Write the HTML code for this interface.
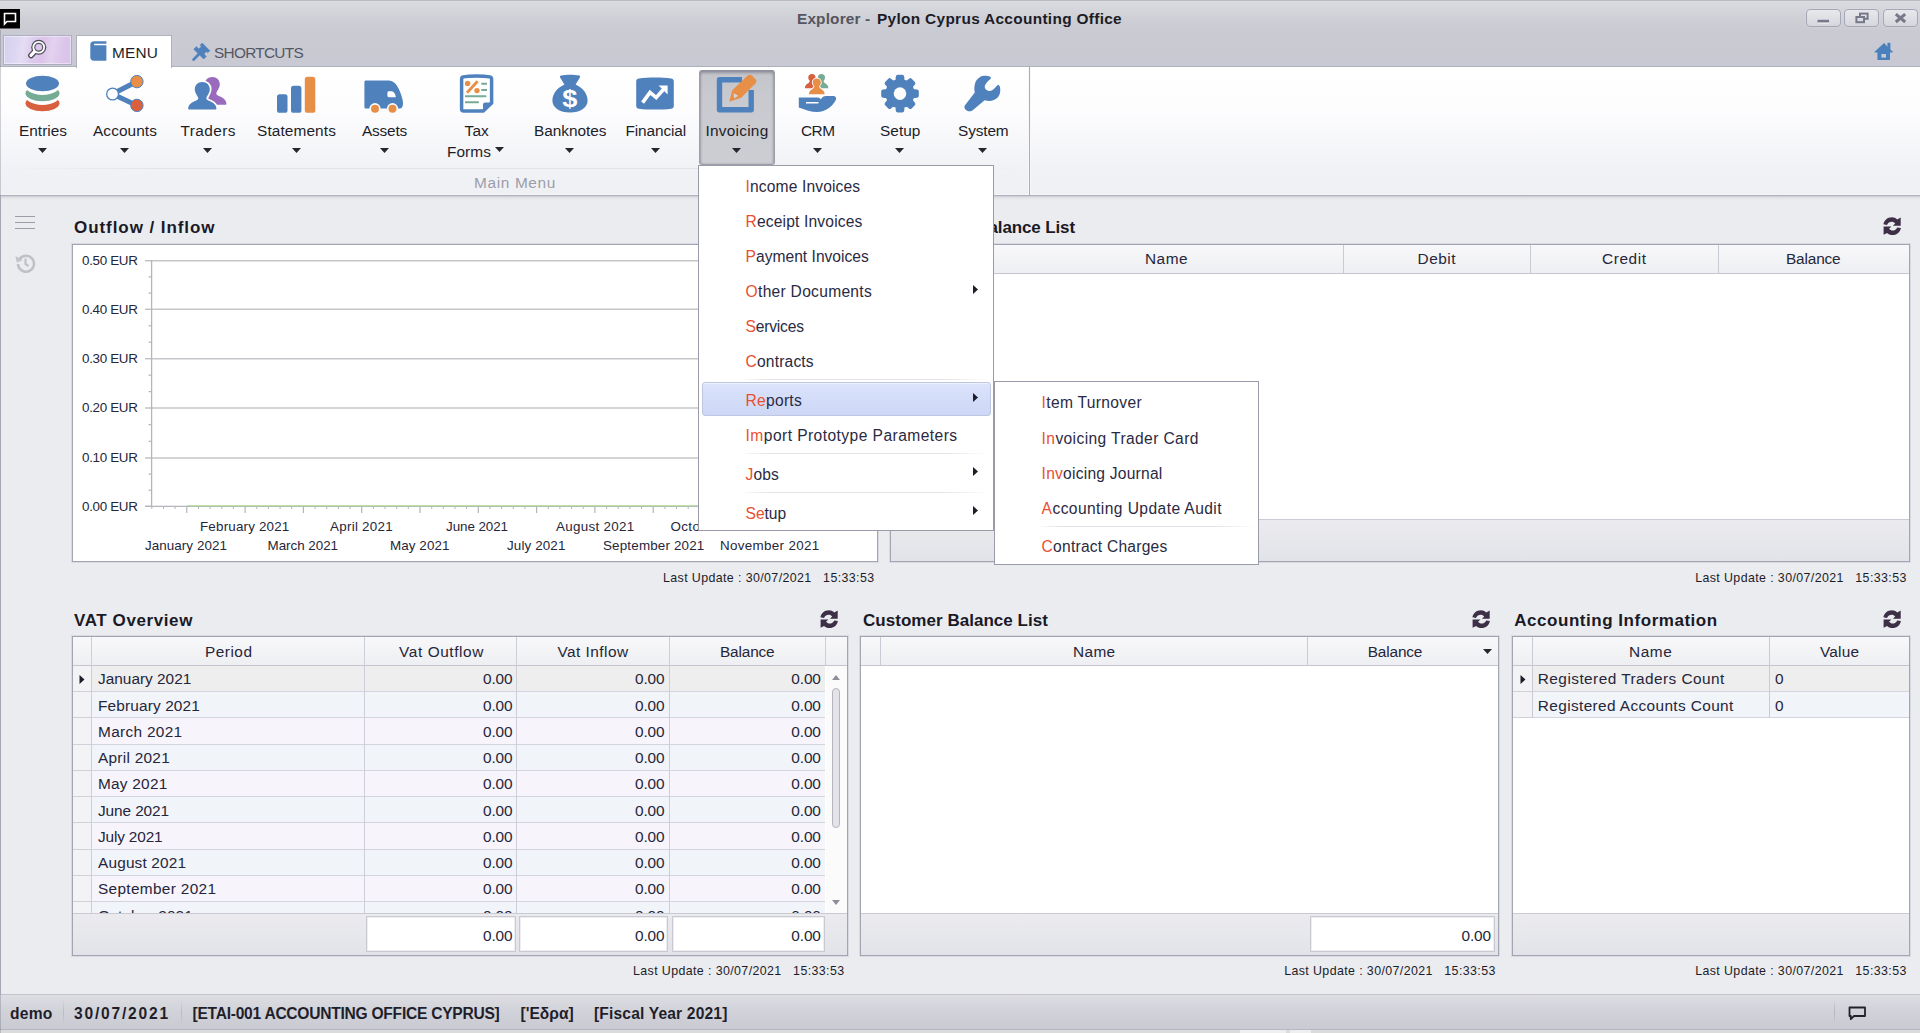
<!DOCTYPE html>
<html><head><meta charset="utf-8"><title>Explorer - Pylon Cyprus Accounting Office</title>
<style>
html,body{margin:0;padding:0}
body{width:1920px;height:1033px;position:relative;overflow:hidden;background:#ebecf0;font-family:"Liberation Sans",sans-serif}
body>div,body>svg,body>span{position:absolute;box-sizing:border-box}
.t{position:absolute;white-space:pre;line-height:20px;height:20px}
.r{color:#e8502f}

</style></head>
<body>
<div style="left:0px;top:0px;width:1920px;height:67px;background:linear-gradient(#dadbdf 0px,#d4d5da 10px,#cdced5 21px,#c9cad2 31px,#c8c9d2 67px);border-top:1px solid #b9bac2"></div>
<svg style="left:0;top:9px" width="20" height="19.5" viewBox="0 0 20 19.5"><rect width="20" height="19.5" fill="#000"/><path d="M4.5 4.5h11v8h-8.5l-2.5 2.5z" fill="none" stroke="#fff" stroke-width="1.6"/></svg>
<span class="t" style="left:797.00px;letter-spacing:0.146px;top:9.16px;font-size:15.4px;font-weight:700;color:#55555f">Explorer -</span>
<span class="t" style="left:877.00px;letter-spacing:0.318px;top:9.16px;font-size:15.4px;font-weight:700;color:#1c1c26">Pylon Cyprus Accounting Office</span>
<div style="left:1805.5px;top:9px;width:35.2px;height:18px;border:1px solid #a6a7b6;border-radius:4px;background:linear-gradient(#e8e8ec,#d6d7dd);box-shadow:0 0 1.5px #e4e4ea"></div>
<div style="left:1844.2px;top:9px;width:35.2px;height:18px;border:1px solid #a6a7b6;border-radius:4px;background:linear-gradient(#e8e8ec,#d6d7dd);box-shadow:0 0 1.5px #e4e4ea"></div>
<div style="left:1882.9px;top:9px;width:35.2px;height:18px;border:1px solid #a6a7b6;border-radius:4px;background:linear-gradient(#e8e8ec,#d6d7dd);box-shadow:0 0 1.5px #e4e4ea"></div>
<svg style="left:1806px;top:9px" width="112" height="18" viewBox="0 0 112 18"><rect x="11.5" y="10.8" width="11.5" height="2.8" fill="#777889"/><rect x="11.5" y="13.6" width="11.5" height="1" fill="#eeeef2"/><g fill="none" stroke="#777889" stroke-width="2"><rect x="54" y="4.6" width="7.6" height="5.2"/><rect x="50.4" y="8" width="7.6" height="5.2" fill="#dcdde2"/></g><path d="M89.8 5.2l9.4 7.8M99.2 5.2l-9.4 7.8" stroke="#777889" stroke-width="3"/></svg>
<svg style="left:1874px;top:42px" width="20" height="19" viewBox="0 0 20 19"><path d="M10.2 1L.8 9.6c-.4.6 0 1 .6 1h2v6.4c0 .6.4 1 1 1h10.6c.6 0 1-.4 1-1v-6.4h2c.6 0 1-.4.6-1l-2.2-2V1.4c0-.4-.2-.6-.6-.6h-1.8c-.4 0-.6.2-.6.6v3.4z" fill="#4a80bb"/><rect x="7.4" y="12" width="4.6" height="3.6" fill="#c8c9d2"/></svg>
<div style="left:3px;top:35px;width:69px;height:30px;border:1px solid #adaebf;background:linear-gradient(100deg,#d6d0f1 0%,#dcd6f2 18%,#e6ddf4 30%,#dccdee 42%,#dcc3e9 58%,#e3d2ef 70%,#dcc6ea 85%,#d6c4ea 100%);box-shadow:inset 0 0 0 1px rgba(255,255,255,0.45)"></div>
<svg style="left:27px;top:38px" width="24" height="22" viewBox="0 0 24 22"><path d="M11.75 9.2L4 17.4" stroke="#4b4b55" stroke-width="5.8" stroke-linecap="round"/><circle cx="11.75" cy="9.2" r="7.5" fill="#4b4b55"/><path d="M11.75 9.2L4 17.4" stroke="#fff" stroke-width="3.2" stroke-linecap="round"/><circle cx="11.75" cy="9.2" r="6.3" fill="#fff"/><circle cx="11.75" cy="9.2" r="4.5" fill="#55555f"/><circle cx="11.75" cy="9.2" r="3.3" fill="#dcc8ec"/></svg>
<div style="left:0px;top:66px;width:1920px;height:130px;background:linear-gradient(#ffffff 0px,#fdfdfe 41px,#f1f2f6 101px,#eff0f4 130px);border-top:1px solid #aeb0bb;border-bottom:1px solid #aeb0bc;box-shadow:inset 0 -1px 0 #f6f6f9"></div>
<div style="left:76px;top:35px;width:96px;height:33px;background:#fff;border:1px solid #b0b1bc;border-bottom:none"></div>
<svg style="left:90px;top:41px" width="17" height="20" viewBox="0 0 17 20"><path d="M3.8 0.3h12.6v2.4H4.6c-.9 0-.9 1.5 0 1.5H16.4V19.7H3.8C1.8 19.7 .3 18.2 .3 16.2V3.8C.3 1.8 1.8 .3 3.8 .3z" fill="#4f81bd"/></svg>
<span class="t" style="left:112.00px;letter-spacing:0.168px;top:42.86px;font-size:15.4px;color:#1e1e2a">MENU</span>
<svg style="left:191.8px;top:42.5px" width="19" height="19" viewBox="0 0 19 19"><path d="M7.2 10.8L1.6 16.6" stroke="#4f81bd" stroke-width="2.8" stroke-linecap="round"/><path d="M10.2 0.1L17.8 7.7 15.7 9.8 14.4 8.6 12 11 14.3 13.4 11.7 16.1 1.8 6.2 4.4 3.6 6.8 6 9.3 3.5 8.1 2.2Z" fill="#4f81bd" stroke="#4f81bd" stroke-width="0.6" stroke-linejoin="round"/></svg>
<span class="t" style="left:214.00px;letter-spacing:-0.722px;top:42.86px;font-size:15.4px;color:#565663">SHORTCUTS</span>
<div style="left:0px;top:168px;width:1029px;height:1px;background:linear-gradient(90deg,rgba(225,226,232,0),#e3e4ea 15%,#e3e4ea 85%,rgba(225,226,232,0))"></div>
<div style="left:1029px;top:67px;width:1px;height:128px;background:#adaeba;box-shadow:-1px 0 0 #f7f7fa,1px 0 0 #f7f7fa"></div>
<span class="t" style="left:474.00px;letter-spacing:0.651px;top:173.06px;font-size:15.4px;color:#9c9da8">Main Menu</span>
<div style="left:699px;top:70px;width:76px;height:95px;border:1px solid #9d9ea8;border-top-color:#8f909a;border-radius:3px;background:linear-gradient(#c4c5cb,#c9cad0 30%,#cdced3);box-shadow:inset 0 2px 3px rgba(70,70,90,0.38),inset 1px 0 2px rgba(70,70,90,0.16),inset -1px 0 2px rgba(70,70,90,0.16)"></div>
<svg style="left:0;top:68px" width="1030" height="50" viewBox="0 68 1030 50"><ellipse cx="42.5" cy="103.3" rx="17" ry="7.9" fill="#d9603f"/><ellipse cx="42.5" cy="93.5" rx="19" ry="11.4" fill="#fdfdfe"/><ellipse cx="42.5" cy="93.3" rx="17" ry="7.9" fill="#76ab96"/><ellipse cx="42.5" cy="83.5" rx="19" ry="11.4" fill="#fefefe"/><ellipse cx="42.5" cy="83.5" rx="16.5" ry="7.65" fill="#4f81bd"/><path d="M112.5 94L136.9 81.5M112.5 94L136.9 105.5" stroke="#4f81bd" stroke-width="5.2"/><circle cx="112.6" cy="94" r="5.9" fill="#fff" stroke="#4f81bd" stroke-width="1.3"/><circle cx="136.9" cy="81.6" r="6.2" fill="#e88f47" stroke="#4f81bd" stroke-width="1"/><circle cx="136.9" cy="105.4" r="6.2" fill="#d9603f" stroke="#4f81bd" stroke-width="1"/><path d="M202.3 82C206.8 82 209.8 85.2 209.8 89.2C209.8 93 207 95.5 206.3 98.3C206.3 99.6 207.5 100.2 209 100.8C213.5 102.5 216.3 105 216.4 108.6C216.4 109.2 216 109.6 215.4 109.6H189.2C188.6 109.6 188.2 109.2 188.2 108.6C188.3 105 191.1 102.5 195.6 100.8C197.1 100.2 198.3 99.6 198.3 98.3C197.6 95.5 194.8 93 194.8 89.2C194.8 85.2 197.8 82 202.3 82Z" fill="#9a6bbd" transform="translate(10 -4.9)"/><path d="M202.3 82C206.8 82 209.8 85.2 209.8 89.2C209.8 93 207 95.5 206.3 98.3C206.3 99.6 207.5 100.2 209 100.8C213.5 102.5 216.3 105 216.4 108.6C216.4 109.2 216 109.6 215.4 109.6H189.2C188.6 109.6 188.2 109.2 188.2 108.6C188.3 105 191.1 102.5 195.6 100.8C197.1 100.2 198.3 99.6 198.3 98.3C197.6 95.5 194.8 93 194.8 89.2C194.8 85.2 197.8 82 202.3 82Z" fill="#fdfdfe" stroke="#fdfdfe" stroke-width="3.6"/><path d="M202.3 82C206.8 82 209.8 85.2 209.8 89.2C209.8 93 207 95.5 206.3 98.3C206.3 99.6 207.5 100.2 209 100.8C213.5 102.5 216.3 105 216.4 108.6C216.4 109.2 216 109.6 215.4 109.6H189.2C188.6 109.6 188.2 109.2 188.2 108.6C188.3 105 191.1 102.5 195.6 100.8C197.1 100.2 198.3 99.6 198.3 98.3C197.6 95.5 194.8 93 194.8 89.2C194.8 85.2 197.8 82 202.3 82Z" fill="#4f81bd"/><rect x="277" y="94.3" width="10.5" height="18.5" rx="2.6" fill="#4f81bd"/><rect x="291" y="85.8" width="10.4" height="27" rx="2.6" fill="#4f81bd"/><rect x="304.8" y="76.8" width="10.5" height="36" rx="2.6" fill="#e88f47"/><path d="M366 80.5H389C396 80.5 400 90 402.4 99C403.6 103.5 403 108.6 400 108.6H366C364.9 108.6 364.4 108 364.4 107V82C364.4 81 365 80.5 366 80.5Z" fill="#4f81bd"/><path d="M389 91.2h2.6c2.2 0 4.2 3.2 4.2 6h-6.8c-1 0-1.6-.6-1.6-1.6v-2.8c0-1 .6-1.6 1.6-1.6z" fill="#fff"/><circle cx="375" cy="108.6" r="5.6" fill="#fcfcfd"/><circle cx="375" cy="108.7" r="4" fill="#e88f47"/><circle cx="392.5" cy="108.6" r="5.6" fill="#fcfcfd"/><circle cx="392.5" cy="108.7" r="4" fill="#e88f47"/><path d="M463.2 76.9C470 75.7 483 75.7 489.8 76.9C491.2 77.2 491.6 78 491.6 79.2V103L483.2 111H463.6C462.1 111 461.6 110.4 461.6 109V79.2C461.6 78 462 77.2 463.2 76.9Z" fill="#fff" stroke="#4f81bd" stroke-width="3.5"/><path d="M492.5 102.6H485.4C483.8 102.6 483 103.4 483 105V112Z" fill="#4f81bd"/><circle cx="467.6" cy="83.4" r="2.7" fill="#e88f47"/><circle cx="477" cy="90.6" r="2.7" fill="#e88f47"/><path d="M477.6 81.2L467 92.8" stroke="#e88f47" stroke-width="2.8"/><path d="M481.3 83.8H487M481.3 90H487M465 96.2H486.3M465 102.2H478.8" stroke="#76ab96" stroke-width="2.1"/><path d="M561 75.6C566 74.6 574 74.6 579.3 75.6C580.5 76 580.2 77 579.6 78L575.6 84.6C583 88 587.6 94 587.6 100.5C587.6 108 580 112.5 570 112.5C560 112.5 552.4 108 552.4 100.5C552.4 94 557 88 564.4 84.6L560.4 78C559.8 77 559.6 76 561 75.6Z" fill="#4f81bd"/><text x="0" y="106.6" text-anchor="middle" font-family="Liberation Sans" font-weight="700" font-size="23" fill="#fff" transform="translate(569.8 0) scale(1.18 1)">$</text><path d="M639 78.5C648 77.3 662 77.3 671 78.5C673 78.8 673.8 79.8 673.8 81.5V105.7C673.8 107.4 673 108.4 671 108.7C662 109.9 648 109.9 639 108.7C637 108.4 636.2 107.4 636.2 105.7V81.5C636.2 79.8 637 78.8 639 78.5Z" fill="#4f81bd"/><path d="M642.6 102.6L650 92.4L656.2 97.6L663.8 89" stroke="#fff" stroke-width="3.6" fill="none"/><path d="M658.6 85.6H667.6V94.6Z" fill="#fff"/><path d="M742 79.8H719.5V109.8H751.2V90" fill="none" stroke="#4f81bd" stroke-width="5.4" stroke-linejoin="round"/><path d="M729.2 101.8L732.3 90.2L747.6 75.6C749.2 74.4 750.8 74.6 752 75.6L755.8 79.4C756.8 80.6 756.6 82 755.6 83.2L741.2 97.8Z" fill="#e88f47"/><path d="M733.6 93.2L738.2 95.8L734 98.6Z" fill="#d9d6da"/><circle cx="811.9" cy="77.6" r="3.6" fill="#d9603f" /><path d="M804.9 88.2C804.9 83.4 809.7 84.4 809.9 80.1H813.9C814.1 84.4 818.9 83.4 818.9 88.2Z" fill="#d9603f" /><circle cx="821.4" cy="77.6" r="3.6" fill="#76ab96" /><path d="M814.4 88.2C814.4 83.4 819.2 84.4 819.4 80.1H823.4C823.6 84.4 828.4 83.4 828.4 88.2Z" fill="#76ab96" /><circle cx="816.8" cy="82.4" r="4.0" fill="#fdfdfe" stroke="#fdfdfe" stroke-width="1.8"/><path d="M809.0 94.2C809.0 88.8 814.4 90.0 814.6 85.2H819.0C819.2 90.0 824.6 88.8 824.6 94.2Z" fill="#fdfdfe" stroke="#fdfdfe" stroke-width="1.8"/><circle cx="816.8" cy="82.4" r="4.0" fill="#e88f47" /><path d="M809.0 94.2C809.0 88.8 814.4 90.0 814.6 85.2H819.0C819.2 90.0 824.6 88.8 824.6 94.2Z" fill="#e88f47" /><path d="M798.8 97.4H818C819.6 97.4 820.4 98.4 820.4 99.6L823.4 96.6C824.2 96 825 95.9 826 95.9H833C835.6 95.9 836.8 98 835.8 100C832.6 106 826 112 817 112C811 112 806 110 798.8 107.4Z" fill="#4f81bd"/><path d="M806 102H817.6C819.2 102 819.2 103.5 817.6 103.5H806Z" fill="#fdfdfe"/><path d="M897.3 81.1L897.8 76.8L902.2 76.8L902.7 81.1L907.0 82.9L910.3 80.2L913.4 83.3L910.7 86.6L912.5 90.9L916.8 91.4L916.8 95.8L912.5 96.3L910.7 100.6L913.4 103.9L910.3 107.0L907.0 104.3L902.7 106.1L902.2 110.4L897.8 110.4L897.3 106.1L893.0 104.3L889.7 107.0L886.6 103.9L889.3 100.6L887.5 96.3L883.2 95.8L883.2 91.4L887.5 90.9L889.3 86.6L886.6 83.3L889.7 80.2L893.0 82.9Z" fill="#4f81bd" stroke="#4f81bd" stroke-width="4" stroke-linejoin="round"/><circle cx="900" cy="93.6" r="6.3" fill="#fdfdfe"/><path d="M964.8 105.4L974.8 92.6C974.2 90 974.2 87 974.8 84.6C975.8 79.6 979.6 76.2 984 75.8C986 75.6 988.4 75.8 989.8 76.4C991.2 77 991.2 78.4 990.2 79.2C987.6 81.2 985.6 83.4 984.8 86C984.4 88.6 986.6 90.8 989.4 91C991.2 91 992.6 90.2 993.8 89L997.2 85.4C998.2 84.6 999.4 85.2 999.8 86.6C1001 91 1000 95.2 997.4 97.8C994.6 100.8 989.6 101.8 984.6 100.2L973 110C971 111.8 968 111.8 966 110C964.4 108.6 964 106.8 964.8 105.4Z" fill="#4f81bd"/></svg>
<span class="t" style="left:19.00px;letter-spacing:0.013px;top:120.86px;font-size:15.4px;color:#1e1e2a">Entries</span>
<svg style="left:38.0px;top:147.5px" width="9" height="5" viewBox="0 0 9 5"><path d="M0 0h9L4.5 5z" fill="#26262e"/></svg>
<span class="t" style="left:93.00px;letter-spacing:0.086px;top:120.86px;font-size:15.4px;color:#1e1e2a">Accounts</span>
<svg style="left:120.0px;top:147.5px" width="9" height="5" viewBox="0 0 9 5"><path d="M0 0h9L4.5 5z" fill="#26262e"/></svg>
<span class="t" style="left:180.50px;letter-spacing:0.433px;top:120.86px;font-size:15.4px;color:#1e1e2a">Traders</span>
<svg style="left:203.25px;top:147.5px" width="9" height="5" viewBox="0 0 9 5"><path d="M0 0h9L4.5 5z" fill="#26262e"/></svg>
<span class="t" style="left:257.00px;letter-spacing:0.114px;top:120.86px;font-size:15.4px;color:#1e1e2a">Statements</span>
<svg style="left:291.5px;top:147.5px" width="9" height="5" viewBox="0 0 9 5"><path d="M0 0h9L4.5 5z" fill="#26262e"/></svg>
<span class="t" style="left:362.00px;letter-spacing:-0.198px;top:120.86px;font-size:15.4px;color:#1e1e2a">Assets</span>
<svg style="left:379.5px;top:147.5px" width="9" height="5" viewBox="0 0 9 5"><path d="M0 0h9L4.5 5z" fill="#26262e"/></svg>
<span class="t" style="left:534.00px;letter-spacing:-0.026px;top:120.86px;font-size:15.4px;color:#1e1e2a">Banknotes</span>
<svg style="left:565.25px;top:147.5px" width="9" height="5" viewBox="0 0 9 5"><path d="M0 0h9L4.5 5z" fill="#26262e"/></svg>
<span class="t" style="left:625.50px;letter-spacing:-0.122px;top:120.86px;font-size:15.4px;color:#1e1e2a">Financial</span>
<svg style="left:650.75px;top:147.5px" width="9" height="5" viewBox="0 0 9 5"><path d="M0 0h9L4.5 5z" fill="#26262e"/></svg>
<span class="t" style="left:705.50px;letter-spacing:0.250px;top:120.86px;font-size:15.4px;color:#1e1e2a">Invoicing</span>
<svg style="left:732.0px;top:147.5px" width="9" height="5" viewBox="0 0 9 5"><path d="M0 0h9L4.5 5z" fill="#26262e"/></svg>
<span class="t" style="left:801.00px;letter-spacing:-0.521px;top:120.86px;font-size:15.4px;color:#1e1e2a">CRM</span>
<svg style="left:812.75px;top:147.5px" width="9" height="5" viewBox="0 0 9 5"><path d="M0 0h9L4.5 5z" fill="#26262e"/></svg>
<span class="t" style="left:880.00px;letter-spacing:0.053px;top:120.86px;font-size:15.4px;color:#1e1e2a">Setup</span>
<svg style="left:895.25px;top:147.5px" width="9" height="5" viewBox="0 0 9 5"><path d="M0 0h9L4.5 5z" fill="#26262e"/></svg>
<span class="t" style="left:958.00px;letter-spacing:-0.135px;top:120.86px;font-size:15.4px;color:#1e1e2a">System</span>
<svg style="left:978.25px;top:147.5px" width="9" height="5" viewBox="0 0 9 5"><path d="M0 0h9L4.5 5z" fill="#26262e"/></svg>
<span class="t" style="left:464.50px;letter-spacing:0.182px;top:120.86px;font-size:15.4px;color:#1e1e2a">Tax</span>
<span class="t" style="left:447.00px;letter-spacing:0.078px;top:141.86px;font-size:15.4px;color:#1e1e2a">Forms</span>
<svg style="left:494.7px;top:147.4px" width="9" height="5" viewBox="0 0 9 5"><path d="M0 0h9L4.5 5z" fill="#26262e"/></svg>
<div style="left:0px;top:196px;width:1920px;height:798px;background:#ebecf0;border-left:1px solid #c3c4cc"></div>
<div style="left:1px;top:196px;width:1919px;height:4px;background:linear-gradient(#cbccd2,#dddee3 35%,#e7e8ec 70%,#ebecf0)"></div>
<div style="left:15px;top:216px;width:20px;height:1.4px;background:#9b9ca6"></div>
<div style="left:15px;top:222px;width:20px;height:1.4px;background:#9b9ca6"></div>
<div style="left:15px;top:227.5px;width:20px;height:1.4px;background:#9b9ca6"></div>
<svg style="left:15px;top:253px" width="21" height="20" viewBox="0 0 21 20"><path d="M4.2 6.5A8 8 0 1 1 3 11" fill="none" stroke="#c0c1c7" stroke-width="2.6"/><path d="M0.4 3l1.4 6.6 6-2.4z" fill="#c2c3c9"/><path d="M10.5 5.6v5.4l3 2.2" fill="none" stroke="#c0c1c7" stroke-width="2.2"/></svg>
<span class="t" style="left:74.00px;letter-spacing:0.936px;top:218.31px;font-size:17px;font-weight:700;color:#1a1a26">Outflow / Inflow</span>
<div style="left:72px;top:244px;width:806px;height:318px;background:#fff;border:1px solid #a4a5b3;box-shadow:0 0 0 1px rgba(150,152,172,0.22)"></div>
<svg style="left:73px;top:245px" width="804" height="316" viewBox="73 245 804 316"><path d="M151 260.75H877" stroke="#c6c6ca" stroke-width="1.3"/><path d="M151 309.25H877" stroke="#c6c6ca" stroke-width="1.3"/><path d="M151 358.75H877" stroke="#c6c6ca" stroke-width="1.3"/><path d="M151 408H877" stroke="#c6c6ca" stroke-width="1.3"/><path d="M151 458H877" stroke="#c6c6ca" stroke-width="1.3"/><path d="M151.6 260V506.8" stroke="#b4b5bb" stroke-width="1.3"/><path d="M145 506.3H877" stroke="#b4b5bb" stroke-width="1.3"/><path d="M145 260.75H151" stroke="#b4b5bb" stroke-width="1.2"/><path d="M148.5 276.9H151" stroke="#b4b5bb" stroke-width="1.2"/><path d="M148.5 293.1H151" stroke="#b4b5bb" stroke-width="1.2"/><path d="M145 309.25H151" stroke="#b4b5bb" stroke-width="1.2"/><path d="M148.5 325.8H151" stroke="#b4b5bb" stroke-width="1.2"/><path d="M148.5 342.2H151" stroke="#b4b5bb" stroke-width="1.2"/><path d="M145 358.75H151" stroke="#b4b5bb" stroke-width="1.2"/><path d="M148.5 375.2H151" stroke="#b4b5bb" stroke-width="1.2"/><path d="M148.5 391.6H151" stroke="#b4b5bb" stroke-width="1.2"/><path d="M145 408H151" stroke="#b4b5bb" stroke-width="1.2"/><path d="M148.5 424.7H151" stroke="#b4b5bb" stroke-width="1.2"/><path d="M148.5 441.3H151" stroke="#b4b5bb" stroke-width="1.2"/><path d="M145 458H151" stroke="#b4b5bb" stroke-width="1.2"/><path d="M148.5 474.1H151" stroke="#b4b5bb" stroke-width="1.2"/><path d="M148.5 490.2H151" stroke="#b4b5bb" stroke-width="1.2"/><path d="M145 506.3H151" stroke="#b4b5bb" stroke-width="1.2"/><path d="M186.8 506V513" stroke="#b4b5bb" stroke-width="1.2"/><path d="M245.1 506V513" stroke="#b4b5bb" stroke-width="1.2"/><path d="M303.4 506V513" stroke="#b4b5bb" stroke-width="1.2"/><path d="M361.7 506V513" stroke="#b4b5bb" stroke-width="1.2"/><path d="M420.0 506V513" stroke="#b4b5bb" stroke-width="1.2"/><path d="M478.3 506V513" stroke="#b4b5bb" stroke-width="1.2"/><path d="M536.6 506V513" stroke="#b4b5bb" stroke-width="1.2"/><path d="M594.9 506V513" stroke="#b4b5bb" stroke-width="1.2"/><path d="M653.2 506V513" stroke="#b4b5bb" stroke-width="1.2"/><path d="M711.5 506V513" stroke="#b4b5bb" stroke-width="1.2"/><path d="M769.8 506V513" stroke="#b4b5bb" stroke-width="1.2"/><path d="M828.1 506V513" stroke="#b4b5bb" stroke-width="1.2"/><path d="M151.8 506V509" stroke="#b4b5bb" stroke-width="1"/><path d="M163.5 506V509" stroke="#b4b5bb" stroke-width="1"/><path d="M175.1 506V509" stroke="#b4b5bb" stroke-width="1"/><path d="M198.5 506V509" stroke="#b4b5bb" stroke-width="1"/><path d="M210.1 506V509" stroke="#b4b5bb" stroke-width="1"/><path d="M221.8 506V509" stroke="#b4b5bb" stroke-width="1"/><path d="M233.4 506V509" stroke="#b4b5bb" stroke-width="1"/><path d="M256.8 506V509" stroke="#b4b5bb" stroke-width="1"/><path d="M268.4 506V509" stroke="#b4b5bb" stroke-width="1"/><path d="M280.1 506V509" stroke="#b4b5bb" stroke-width="1"/><path d="M291.7 506V509" stroke="#b4b5bb" stroke-width="1"/><path d="M315.1 506V509" stroke="#b4b5bb" stroke-width="1"/><path d="M326.7 506V509" stroke="#b4b5bb" stroke-width="1"/><path d="M338.4 506V509" stroke="#b4b5bb" stroke-width="1"/><path d="M350.0 506V509" stroke="#b4b5bb" stroke-width="1"/><path d="M373.4 506V509" stroke="#b4b5bb" stroke-width="1"/><path d="M385.0 506V509" stroke="#b4b5bb" stroke-width="1"/><path d="M396.7 506V509" stroke="#b4b5bb" stroke-width="1"/><path d="M408.3 506V509" stroke="#b4b5bb" stroke-width="1"/><path d="M431.7 506V509" stroke="#b4b5bb" stroke-width="1"/><path d="M443.3 506V509" stroke="#b4b5bb" stroke-width="1"/><path d="M455.0 506V509" stroke="#b4b5bb" stroke-width="1"/><path d="M466.6 506V509" stroke="#b4b5bb" stroke-width="1"/><path d="M490.0 506V509" stroke="#b4b5bb" stroke-width="1"/><path d="M501.6 506V509" stroke="#b4b5bb" stroke-width="1"/><path d="M513.3 506V509" stroke="#b4b5bb" stroke-width="1"/><path d="M524.9 506V509" stroke="#b4b5bb" stroke-width="1"/><path d="M548.3 506V509" stroke="#b4b5bb" stroke-width="1"/><path d="M559.9 506V509" stroke="#b4b5bb" stroke-width="1"/><path d="M571.6 506V509" stroke="#b4b5bb" stroke-width="1"/><path d="M583.2 506V509" stroke="#b4b5bb" stroke-width="1"/><path d="M606.6 506V509" stroke="#b4b5bb" stroke-width="1"/><path d="M618.2 506V509" stroke="#b4b5bb" stroke-width="1"/><path d="M629.9 506V509" stroke="#b4b5bb" stroke-width="1"/><path d="M641.5 506V509" stroke="#b4b5bb" stroke-width="1"/><path d="M664.9 506V509" stroke="#b4b5bb" stroke-width="1"/><path d="M676.5 506V509" stroke="#b4b5bb" stroke-width="1"/><path d="M688.2 506V509" stroke="#b4b5bb" stroke-width="1"/><path d="M699.8 506V509" stroke="#b4b5bb" stroke-width="1"/><path d="M723.2 506V509" stroke="#b4b5bb" stroke-width="1"/><path d="M734.8 506V509" stroke="#b4b5bb" stroke-width="1"/><path d="M746.5 506V509" stroke="#b4b5bb" stroke-width="1"/><path d="M758.1 506V509" stroke="#b4b5bb" stroke-width="1"/><path d="M781.5 506V509" stroke="#b4b5bb" stroke-width="1"/><path d="M793.1 506V509" stroke="#b4b5bb" stroke-width="1"/><path d="M804.8 506V509" stroke="#b4b5bb" stroke-width="1"/><path d="M816.4 506V509" stroke="#b4b5bb" stroke-width="1"/><path d="M839.8 506V509" stroke="#b4b5bb" stroke-width="1"/><path d="M187 505.7H829" stroke="#addc90" stroke-width="1.1"/></svg>
<span class="t" style="left:82.00px;letter-spacing:-0.320px;top:251.01px;font-size:13.4px;color:#26263a">0.50 EUR</span>
<span class="t" style="left:82.00px;letter-spacing:-0.320px;top:299.51px;font-size:13.4px;color:#26263a">0.40 EUR</span>
<span class="t" style="left:82.00px;letter-spacing:-0.320px;top:349.01px;font-size:13.4px;color:#26263a">0.30 EUR</span>
<span class="t" style="left:82.00px;letter-spacing:-0.320px;top:398.26px;font-size:13.4px;color:#26263a">0.20 EUR</span>
<span class="t" style="left:82.00px;letter-spacing:-0.320px;top:448.26px;font-size:13.4px;color:#26263a">0.10 EUR</span>
<span class="t" style="left:82.00px;letter-spacing:-0.320px;top:496.56px;font-size:13.4px;color:#26263a">0.00 EUR</span>
<span class="t" style="left:200.00px;letter-spacing:0.185px;top:517.16px;font-size:13.4px;color:#26263a">February 2021</span>
<span class="t" style="left:330.00px;letter-spacing:0.269px;top:517.16px;font-size:13.4px;color:#26263a">April 2021</span>
<span class="t" style="left:446.00px;letter-spacing:-0.061px;top:517.16px;font-size:13.4px;color:#26263a">June 2021</span>
<span class="t" style="left:556.00px;letter-spacing:0.300px;top:517.16px;font-size:13.4px;color:#26263a">August 2021</span>
<span class="t" style="left:670.50px;letter-spacing:0.362px;top:517.16px;font-size:13.4px;color:#26263a">October 2021</span>
<span class="t" style="left:772.00px;letter-spacing:0.055px;top:517.16px;font-size:13.4px;color:#26263a">December 2021</span>
<span class="t" style="left:145.00px;letter-spacing:0.070px;top:536.16px;font-size:13.4px;color:#26263a">January 2021</span>
<span class="t" style="left:267.50px;letter-spacing:-0.022px;top:536.16px;font-size:13.4px;color:#26263a">March 2021</span>
<span class="t" style="left:390.00px;letter-spacing:0.086px;top:536.16px;font-size:13.4px;color:#26263a">May 2021</span>
<span class="t" style="left:507.00px;letter-spacing:0.130px;top:536.16px;font-size:13.4px;color:#26263a">July 2021</span>
<span class="t" style="left:603.00px;letter-spacing:0.177px;top:536.16px;font-size:13.4px;color:#26263a">September 2021</span>
<span class="t" style="left:720.00px;letter-spacing:0.325px;top:536.16px;font-size:13.4px;color:#26263a">November 2021</span>
<span class="t" style="left:663.00px;letter-spacing:0.394px;top:567.70px;font-size:12.4px;color:#1c1c28">Last Update : 30/07/2021   15:33:53</span>
<span class="t" style="left:892.00px;letter-spacing:0.748px;top:218.31px;font-size:17px;font-weight:700;color:#1a1a26">Supplier</span>
<span class="t" style="left:976.30px;letter-spacing:-0.121px;top:218.31px;font-size:17px;font-weight:700;color:#1a1a26">Balance List</span>
<svg style="left:1882.6px;top:216.6px" width="18.5" height="18.5" viewBox="0 0 18.5 18.5"><path d="M0.4 7.3C1.2 3 4.6 0.2 8.8 0.2C11 0.2 12.8 1 14.2 2.4L17.7 0.5V8.8H9.9L12.2 6.6C11.2 5.4 10 4.8 8.8 4.8C6.6 4.8 5 6 4 7.9Z" fill="#3d2f45"/><path d="M0.4 7.3C1.2 3 4.6 0.2 8.8 0.2C11 0.2 12.8 1 14.2 2.4L17.7 0.5V8.8H9.9L12.2 6.6C11.2 5.4 10 4.8 8.8 4.8C6.6 4.8 5 6 4 7.9Z" fill="#3d2f45" transform="rotate(180 9.15 9.15)"/></svg>
<div style="left:890px;top:244px;width:1020px;height:318px;background:#fff;border:1px solid #a4a5b3;box-shadow:0 0 0 1px rgba(150,152,172,0.22)"></div>
<div style="left:891px;top:245px;width:1018px;height:29px;background:linear-gradient(#f8f8fa,#eeeff2);border-bottom:1px solid #c4c5ce"></div>
<div style="left:1343px;top:245px;width:1px;height:28px;background:#c9cad3"></div>
<div style="left:1530px;top:245px;width:1px;height:28px;background:#c9cad3"></div>
<div style="left:1718px;top:245px;width:1px;height:28px;background:#c9cad3"></div>
<div style="left:910px;top:245px;width:1px;height:28px;background:#c9cad3"></div>
<span class="t" style="left:1145.00px;letter-spacing:0.484px;top:249.16px;font-size:15.4px;color:#26263a">Name</span>
<span class="t" style="left:1417.50px;letter-spacing:0.512px;top:249.16px;font-size:15.4px;color:#26263a">Debit</span>
<span class="t" style="left:1602.00px;letter-spacing:0.573px;top:249.16px;font-size:15.4px;color:#26263a">Credit</span>
<span class="t" style="left:1786.00px;letter-spacing:-0.161px;top:249.16px;font-size:15.4px;color:#26263a">Balance</span>
<div style="left:891px;top:519px;width:1018px;height:42px;background:linear-gradient(#ebebef,#e2e3e8);border-top:1px solid #c9cad2"></div>
<span class="t" style="left:1695.20px;letter-spacing:0.394px;top:567.70px;font-size:12.4px;color:#1c1c28">Last Update : 30/07/2021   15:33:53</span>
<span class="t" style="left:74.00px;letter-spacing:0.599px;top:611.11px;font-size:17px;font-weight:700;color:#1a1a26">VAT Overview</span>
<svg style="left:820.2px;top:610px" width="18.5" height="18.5" viewBox="0 0 18.5 18.5"><path d="M0.4 7.3C1.2 3 4.6 0.2 8.8 0.2C11 0.2 12.8 1 14.2 2.4L17.7 0.5V8.8H9.9L12.2 6.6C11.2 5.4 10 4.8 8.8 4.8C6.6 4.8 5 6 4 7.9Z" fill="#3d2f45"/><path d="M0.4 7.3C1.2 3 4.6 0.2 8.8 0.2C11 0.2 12.8 1 14.2 2.4L17.7 0.5V8.8H9.9L12.2 6.6C11.2 5.4 10 4.8 8.8 4.8C6.6 4.8 5 6 4 7.9Z" fill="#3d2f45" transform="rotate(180 9.15 9.15)"/></svg>
<div style="left:72px;top:636px;width:776px;height:320px;background:#fff;border:1px solid #a4a5b3;box-shadow:0 0 0 1px rgba(150,152,172,0.22)"></div>
<div style="left:92px;top:665.75px;width:733px;height:26.25px;background:#eeeeef;border-bottom:1px solid #d3d5de"></div>
<div style="left:73px;top:665.75px;width:18px;height:26.25px;background:#f3f3f6;border-bottom:1px solid #cfd0d8"></div>
<span class="t" style="left:98.00px;letter-spacing:0.002px;top:669.41px;font-size:15.4px;color:#26263a">January 2021</span>
<span class="t" style="left:483.00px;letter-spacing:-0.117px;top:669.41px;font-size:15.4px;color:#26263a">0.00</span>
<span class="t" style="left:635.00px;letter-spacing:-0.117px;top:669.41px;font-size:15.4px;color:#26263a">0.00</span>
<span class="t" style="left:791.30px;letter-spacing:-0.117px;top:669.41px;font-size:15.4px;color:#26263a">0.00</span>
<div style="left:92px;top:692.0px;width:733px;height:26.25px;background:#f1f4f9;border-bottom:1px solid #d3d5de"></div>
<div style="left:73px;top:692.0px;width:18px;height:26.25px;background:#f3f3f6;border-bottom:1px solid #cfd0d8"></div>
<span class="t" style="left:98.00px;letter-spacing:0.145px;top:695.66px;font-size:15.4px;color:#26263a">February 2021</span>
<span class="t" style="left:483.00px;letter-spacing:-0.117px;top:695.66px;font-size:15.4px;color:#26263a">0.00</span>
<span class="t" style="left:635.00px;letter-spacing:-0.117px;top:695.66px;font-size:15.4px;color:#26263a">0.00</span>
<span class="t" style="left:791.30px;letter-spacing:-0.117px;top:695.66px;font-size:15.4px;color:#26263a">0.00</span>
<div style="left:92px;top:718.25px;width:733px;height:26.25px;background:#f7f4fc;border-bottom:1px solid #d3d5de"></div>
<div style="left:73px;top:718.25px;width:18px;height:26.25px;background:#f3f3f6;border-bottom:1px solid #cfd0d8"></div>
<span class="t" style="left:98.00px;letter-spacing:0.322px;top:721.91px;font-size:15.4px;color:#26263a">March 2021</span>
<span class="t" style="left:483.00px;letter-spacing:-0.117px;top:721.91px;font-size:15.4px;color:#26263a">0.00</span>
<span class="t" style="left:635.00px;letter-spacing:-0.117px;top:721.91px;font-size:15.4px;color:#26263a">0.00</span>
<span class="t" style="left:791.30px;letter-spacing:-0.117px;top:721.91px;font-size:15.4px;color:#26263a">0.00</span>
<div style="left:92px;top:744.5px;width:733px;height:26.25px;background:#f1f4f9;border-bottom:1px solid #d3d5de"></div>
<div style="left:73px;top:744.5px;width:18px;height:26.25px;background:#f3f3f6;border-bottom:1px solid #cfd0d8"></div>
<span class="t" style="left:98.00px;letter-spacing:0.269px;top:748.16px;font-size:15.4px;color:#26263a">April 2021</span>
<span class="t" style="left:483.00px;letter-spacing:-0.117px;top:748.16px;font-size:15.4px;color:#26263a">0.00</span>
<span class="t" style="left:635.00px;letter-spacing:-0.117px;top:748.16px;font-size:15.4px;color:#26263a">0.00</span>
<span class="t" style="left:791.30px;letter-spacing:-0.117px;top:748.16px;font-size:15.4px;color:#26263a">0.00</span>
<div style="left:92px;top:770.75px;width:733px;height:26.25px;background:#f7f4fc;border-bottom:1px solid #d3d5de"></div>
<div style="left:73px;top:770.75px;width:18px;height:26.25px;background:#f3f3f6;border-bottom:1px solid #cfd0d8"></div>
<span class="t" style="left:98.00px;letter-spacing:0.238px;top:774.41px;font-size:15.4px;color:#26263a">May 2021</span>
<span class="t" style="left:483.00px;letter-spacing:-0.117px;top:774.41px;font-size:15.4px;color:#26263a">0.00</span>
<span class="t" style="left:635.00px;letter-spacing:-0.117px;top:774.41px;font-size:15.4px;color:#26263a">0.00</span>
<span class="t" style="left:791.30px;letter-spacing:-0.117px;top:774.41px;font-size:15.4px;color:#26263a">0.00</span>
<div style="left:92px;top:797.0px;width:733px;height:26.25px;background:#f1f4f9;border-bottom:1px solid #d3d5de"></div>
<div style="left:73px;top:797.0px;width:18px;height:26.25px;background:#f3f3f6;border-bottom:1px solid #cfd0d8"></div>
<span class="t" style="left:98.00px;letter-spacing:-0.099px;top:800.66px;font-size:15.4px;color:#26263a">June 2021</span>
<span class="t" style="left:483.00px;letter-spacing:-0.117px;top:800.66px;font-size:15.4px;color:#26263a">0.00</span>
<span class="t" style="left:635.00px;letter-spacing:-0.117px;top:800.66px;font-size:15.4px;color:#26263a">0.00</span>
<span class="t" style="left:791.30px;letter-spacing:-0.117px;top:800.66px;font-size:15.4px;color:#26263a">0.00</span>
<div style="left:92px;top:823.25px;width:733px;height:26.25px;background:#f7f4fc;border-bottom:1px solid #d3d5de"></div>
<div style="left:73px;top:823.25px;width:18px;height:26.25px;background:#f3f3f6;border-bottom:1px solid #cfd0d8"></div>
<span class="t" style="left:98.00px;letter-spacing:-0.155px;top:826.91px;font-size:15.4px;color:#26263a">July 2021</span>
<span class="t" style="left:483.00px;letter-spacing:-0.117px;top:826.91px;font-size:15.4px;color:#26263a">0.00</span>
<span class="t" style="left:635.00px;letter-spacing:-0.117px;top:826.91px;font-size:15.4px;color:#26263a">0.00</span>
<span class="t" style="left:791.30px;letter-spacing:-0.117px;top:826.91px;font-size:15.4px;color:#26263a">0.00</span>
<div style="left:92px;top:849.5px;width:733px;height:26.25px;background:#f1f4f9;border-bottom:1px solid #d3d5de"></div>
<div style="left:73px;top:849.5px;width:18px;height:26.25px;background:#f3f3f6;border-bottom:1px solid #cfd0d8"></div>
<span class="t" style="left:98.00px;letter-spacing:0.169px;top:853.16px;font-size:15.4px;color:#26263a">August 2021</span>
<span class="t" style="left:483.00px;letter-spacing:-0.117px;top:853.16px;font-size:15.4px;color:#26263a">0.00</span>
<span class="t" style="left:635.00px;letter-spacing:-0.117px;top:853.16px;font-size:15.4px;color:#26263a">0.00</span>
<span class="t" style="left:791.30px;letter-spacing:-0.117px;top:853.16px;font-size:15.4px;color:#26263a">0.00</span>
<div style="left:92px;top:875.75px;width:733px;height:26.25px;background:#f7f4fc;border-bottom:1px solid #d3d5de"></div>
<div style="left:73px;top:875.75px;width:18px;height:26.25px;background:#f3f3f6;border-bottom:1px solid #cfd0d8"></div>
<span class="t" style="left:98.00px;letter-spacing:0.321px;top:879.41px;font-size:15.4px;color:#26263a">September 2021</span>
<span class="t" style="left:483.00px;letter-spacing:-0.117px;top:879.41px;font-size:15.4px;color:#26263a">0.00</span>
<span class="t" style="left:635.00px;letter-spacing:-0.117px;top:879.41px;font-size:15.4px;color:#26263a">0.00</span>
<span class="t" style="left:791.30px;letter-spacing:-0.117px;top:879.41px;font-size:15.4px;color:#26263a">0.00</span>
<div style="left:92px;top:902.0px;width:733px;height:26.25px;background:#f1f4f9;border-bottom:1px solid #d3d5de"></div>
<div style="left:73px;top:902.0px;width:18px;height:26.25px;background:#f3f3f6;border-bottom:1px solid #cfd0d8"></div>
<span class="t" style="left:98.00px;letter-spacing:0.145px;top:905.66px;font-size:15.4px;color:#26263a">October 2021</span>
<span class="t" style="left:483.00px;letter-spacing:-0.117px;top:905.66px;font-size:15.4px;color:#26263a">0.00</span>
<span class="t" style="left:635.00px;letter-spacing:-0.117px;top:905.66px;font-size:15.4px;color:#26263a">0.00</span>
<span class="t" style="left:791.30px;letter-spacing:-0.117px;top:905.66px;font-size:15.4px;color:#26263a">0.00</span>
<svg style="left:79px;top:674.5px" width="6" height="9" viewBox="0 0 6 9"><path d="M0.5 0L5.5 4.5 0.5 9z" fill="#1e1e2a"/></svg>
<div style="left:826px;top:666px;width:21px;height:248px;background:#fbfbfc"></div>
<div style="left:831.5px;top:688px;width:8.5px;height:139.5px;background:#e4e4e8;border:1px solid #b4b5be;border-radius:4px"></div>
<svg style="left:831.5px;top:674.5px" width="8" height="5" viewBox="0 0 8 5"><path d="M0 5h8L4 0z" fill="#8e8f99"/></svg>
<svg style="left:831.5px;top:899.5px" width="8" height="5" viewBox="0 0 8 5"><path d="M0 0h8L4 5z" fill="#8e8f99"/></svg>
<div style="left:73px;top:913px;width:774px;height:42px;background:linear-gradient(#ebebef,#e2e3e8);border-top:1px solid #c9cad2"></div>
<div style="left:73px;top:637px;width:774px;height:29px;background:linear-gradient(#f8f8fa,#eeeff2);border-bottom:1px solid #c4c5ce"></div>
<div style="left:91px;top:637px;width:1px;height:276px;background:#cdced7"></div>
<div style="left:364px;top:637px;width:1px;height:276px;background:#cdced7"></div>
<div style="left:516px;top:637px;width:1px;height:276px;background:#cdced7"></div>
<div style="left:669px;top:637px;width:1px;height:276px;background:#cdced7"></div>
<div style="left:825px;top:637px;width:1px;height:28px;background:#cdced7"></div>
<span class="t" style="left:205.00px;letter-spacing:0.500px;top:641.66px;font-size:15.4px;color:#26263a">Period</span>
<span class="t" style="left:399.00px;letter-spacing:0.598px;top:641.66px;font-size:15.4px;color:#26263a">Vat Outflow</span>
<span class="t" style="left:557.50px;letter-spacing:0.455px;top:641.66px;font-size:15.4px;color:#26263a">Vat Inflow</span>
<span class="t" style="left:720.00px;letter-spacing:-0.161px;top:641.66px;font-size:15.4px;color:#26263a">Balance</span>
<div style="left:366px;top:916px;width:150px;height:36px;background:#fff;border:1px solid #c8c9d1;box-shadow:inset 0 0 0 1px #eeeef2"></div>
<div style="left:519px;top:916px;width:149px;height:36px;background:#fff;border:1px solid #c8c9d1;box-shadow:inset 0 0 0 1px #eeeef2"></div>
<div style="left:672px;top:916px;width:153px;height:36px;background:#fff;border:1px solid #c8c9d1;box-shadow:inset 0 0 0 1px #eeeef2"></div>
<span class="t" style="left:483.00px;letter-spacing:-0.117px;top:925.96px;font-size:15.4px;color:#26263a">0.00</span>
<span class="t" style="left:635.00px;letter-spacing:-0.117px;top:925.96px;font-size:15.4px;color:#26263a">0.00</span>
<span class="t" style="left:791.30px;letter-spacing:-0.117px;top:925.96px;font-size:15.4px;color:#26263a">0.00</span>
<span class="t" style="left:633.00px;letter-spacing:0.394px;top:961.30px;font-size:12.4px;color:#1c1c28">Last Update : 30/07/2021   15:33:53</span>
<span class="t" style="left:863.00px;letter-spacing:0.036px;top:611.11px;font-size:17px;font-weight:700;color:#1a1a26">Customer Balance List</span>
<svg style="left:1471.6px;top:610px" width="18.5" height="18.5" viewBox="0 0 18.5 18.5"><path d="M0.4 7.3C1.2 3 4.6 0.2 8.8 0.2C11 0.2 12.8 1 14.2 2.4L17.7 0.5V8.8H9.9L12.2 6.6C11.2 5.4 10 4.8 8.8 4.8C6.6 4.8 5 6 4 7.9Z" fill="#3d2f45"/><path d="M0.4 7.3C1.2 3 4.6 0.2 8.8 0.2C11 0.2 12.8 1 14.2 2.4L17.7 0.5V8.8H9.9L12.2 6.6C11.2 5.4 10 4.8 8.8 4.8C6.6 4.8 5 6 4 7.9Z" fill="#3d2f45" transform="rotate(180 9.15 9.15)"/></svg>
<div style="left:860px;top:636px;width:639px;height:320px;background:#fff;border:1px solid #a4a5b3;box-shadow:0 0 0 1px rgba(150,152,172,0.22)"></div>
<div style="left:861px;top:637px;width:637px;height:29px;background:linear-gradient(#f8f8fa,#eeeff2);border-bottom:1px solid #c4c5ce"></div>
<div style="left:880px;top:637px;width:1px;height:28px;background:#c9cad3"></div>
<div style="left:1307px;top:637px;width:1px;height:28px;background:#c9cad3"></div>
<span class="t" style="left:1073.00px;letter-spacing:0.359px;top:641.66px;font-size:15.4px;color:#26263a">Name</span>
<span class="t" style="left:1367.70px;letter-spacing:-0.146px;top:641.66px;font-size:15.4px;color:#26263a">Balance</span>
<svg style="left:1482.5px;top:649px" width="9" height="5" viewBox="0 0 9 5"><path d="M0 0h9L4.5 5z" fill="#26262e"/></svg>
<div style="left:861px;top:913px;width:637px;height:42px;background:linear-gradient(#ebebef,#e2e3e8);border-top:1px solid #c9cad2"></div>
<div style="left:1310px;top:916px;width:185px;height:36px;background:#fff;border:1px solid #c8c9d1;box-shadow:inset 0 0 0 1px #eeeef2"></div>
<span class="t" style="left:1461.50px;letter-spacing:-0.117px;top:925.96px;font-size:15.4px;color:#26263a">0.00</span>
<span class="t" style="left:1284.20px;letter-spacing:0.394px;top:961.30px;font-size:12.4px;color:#1c1c28">Last Update : 30/07/2021   15:33:53</span>
<span class="t" style="left:1514.30px;letter-spacing:0.531px;top:611.11px;font-size:17px;font-weight:700;color:#1a1a26">Accounting Information</span>
<svg style="left:1882.6px;top:610px" width="18.5" height="18.5" viewBox="0 0 18.5 18.5"><path d="M0.4 7.3C1.2 3 4.6 0.2 8.8 0.2C11 0.2 12.8 1 14.2 2.4L17.7 0.5V8.8H9.9L12.2 6.6C11.2 5.4 10 4.8 8.8 4.8C6.6 4.8 5 6 4 7.9Z" fill="#3d2f45"/><path d="M0.4 7.3C1.2 3 4.6 0.2 8.8 0.2C11 0.2 12.8 1 14.2 2.4L17.7 0.5V8.8H9.9L12.2 6.6C11.2 5.4 10 4.8 8.8 4.8C6.6 4.8 5 6 4 7.9Z" fill="#3d2f45" transform="rotate(180 9.15 9.15)"/></svg>
<div style="left:1512px;top:636px;width:398px;height:320px;background:#fff;border:1px solid #a4a5b3;box-shadow:0 0 0 1px rgba(150,152,172,0.22)"></div>
<div style="left:1513px;top:637px;width:396px;height:29px;background:linear-gradient(#f8f8fa,#eeeff2);border-bottom:1px solid #c4c5ce"></div>
<div style="left:1532px;top:665.75px;width:377px;height:26.25px;background:#eeeeef;border-bottom:1px solid #d3d5de"></div>
<div style="left:1532px;top:692px;width:377px;height:26.25px;background:#f1f4f9;border-bottom:1px solid #d3d5de"></div>
<div style="left:1513px;top:665.75px;width:19px;height:26.25px;background:#f3f3f6;border-bottom:1px solid #cfd0d8"></div>
<div style="left:1513px;top:692px;width:19px;height:26.25px;background:#f3f3f6;border-bottom:1px solid #cfd0d8"></div>
<div style="left:1532px;top:637px;width:1px;height:81px;background:#c9cad3"></div>
<div style="left:1769px;top:637px;width:1px;height:81px;background:#c9cad3"></div>
<span class="t" style="left:1629.00px;letter-spacing:0.559px;top:641.66px;font-size:15.4px;color:#26263a">Name</span>
<span class="t" style="left:1820.00px;letter-spacing:0.213px;top:641.66px;font-size:15.4px;color:#26263a">Value</span>
<span class="t" style="left:1537.80px;letter-spacing:0.449px;top:669.36px;font-size:15.4px;color:#26263a">Registered Traders Count</span>
<span class="t" style="left:1537.80px;letter-spacing:0.375px;top:695.66px;font-size:15.4px;color:#26263a">Registered Accounts Count</span>
<span class="t" style="left:1775.00px;letter-spacing:0.037px;top:669.36px;font-size:15.4px;color:#26263a">0</span>
<span class="t" style="left:1775.00px;letter-spacing:0.037px;top:695.66px;font-size:15.4px;color:#26263a">0</span>
<svg style="left:1519.5px;top:674.5px" width="6" height="9" viewBox="0 0 6 9"><path d="M0.5 0L5.5 4.5 0.5 9z" fill="#1e1e2a"/></svg>
<div style="left:1513px;top:913px;width:396px;height:42px;background:linear-gradient(#ebebef,#e2e3e8);border-top:1px solid #c9cad2"></div>
<span class="t" style="left:1695.20px;letter-spacing:0.394px;top:961.30px;font-size:12.4px;color:#1c1c28">Last Update : 30/07/2021   15:33:53</span>
<div style="left:0px;top:994px;width:1920px;height:36px;background:linear-gradient(#dddde2,#d1d2d9 50%,#c9cad2);border-top:1px solid #c2c3cc;border-bottom:1px solid #b6b7c3"></div>
<div style="left:0px;top:1030px;width:1920px;height:3px;background:#dbdbdb"></div>
<div style="left:1240px;top:1030px;width:46px;height:3px;background:#efefef"></div>
<div style="left:1290px;top:1030px;width:21px;height:3px;background:#efefef"></div>
<div style="left:62.6px;top:999px;width:1.3px;height:27px;background:linear-gradient(rgba(180,180,190,0),#b9bac4,rgba(180,180,190,0))"></div>
<div style="left:181px;top:999px;width:1.3px;height:27px;background:linear-gradient(rgba(180,180,190,0),#b9bac4,rgba(180,180,190,0))"></div>
<div style="left:1834px;top:999px;width:1px;height:26px;background:linear-gradient(rgba(180,180,190,0),#b3b4be,rgba(180,180,190,0))"></div>
<span class="t" style="left:10.00px;letter-spacing:0.227px;top:1003.59px;font-size:15.6px;font-weight:700;color:#1f1f2b">demo</span>
<span class="t" style="left:74.00px;letter-spacing:1.795px;top:1003.59px;font-size:15.6px;font-weight:700;color:#1f1f2b">30/07/2021</span>
<span class="t" style="left:192.50px;letter-spacing:-0.264px;top:1003.59px;font-size:15.6px;font-weight:700;color:#1f1f2b">[ETAI-001 ACCOUNTING OFFICE CYPRUS]</span>
<span class="t" style="left:520.50px;letter-spacing:0.016px;top:1003.59px;font-size:15.6px;font-weight:700;color:#1f1f2b">[&#x27;Εδρα]</span>
<span class="t" style="left:594.00px;letter-spacing:0.160px;top:1003.59px;font-size:15.6px;font-weight:700;color:#1f1f2b">[Fiscal Year 2021]</span>
<svg style="left:1848px;top:1006px" width="19" height="15" viewBox="0 0 19 15"><path d="M1.5 1.5h15.5v8.5H6l-3.2 3.2V10H1.5z" fill="none" stroke="#22222c" stroke-width="1.8" stroke-linejoin="round"/></svg>
<div style="left:0px;top:30px;width:1px;height:1003px;background:rgba(90,92,110,0.28)"></div>
<div style="left:698px;top:165px;width:296px;height:366px;background:#fff;border:1px solid #9a9ba8"></div>
<div style="left:702px;top:382px;width:289px;height:34px;border:1px solid #bfc6e2;border-radius:3px;background:linear-gradient(#dce4fc,#d3ddf9 50%,#ced8f6);box-shadow:inset 0 1px 0 rgba(255,255,255,0.5)"></div>
<span class="t" style="left:745.60px;letter-spacing:0.134px;top:177.19px;font-size:15.6px;color:#2a2a42"><span class="r">I</span>ncome Invoices</span>
<span class="t" style="left:745.60px;letter-spacing:0.155px;top:212.19px;font-size:15.6px;color:#2a2a42"><span class="r">R</span>eceipt Invoices</span>
<span class="t" style="left:745.60px;letter-spacing:0.008px;top:247.49px;font-size:15.6px;color:#2a2a42"><span class="r">P</span>ayment Invoices</span>
<span class="t" style="left:745.60px;letter-spacing:0.280px;top:282.19px;font-size:15.6px;color:#2a2a42"><span class="r">O</span>ther Documents</span>
<span class="t" style="left:745.60px;letter-spacing:-0.200px;top:317.19px;font-size:15.6px;color:#2a2a42"><span class="r">S</span>ervices</span>
<span class="t" style="left:745.60px;letter-spacing:0.163px;top:352.19px;font-size:15.6px;color:#2a2a42"><span class="r">C</span>ontracts</span>
<span class="t" style="left:745.60px;letter-spacing:0.256px;top:391.09px;font-size:15.6px;color:#2a2a42"><span class="r">Re</span>ports</span>
<span class="t" style="left:745.60px;letter-spacing:0.433px;top:426.19px;font-size:15.6px;color:#2a2a42"><span class="r">Im</span>port Prototype Parameters</span>
<span class="t" style="left:745.60px;letter-spacing:0.062px;top:464.59px;font-size:15.6px;color:#2a2a42"><span class="r">J</span>obs</span>
<span class="t" style="left:745.60px;letter-spacing:-0.073px;top:503.59px;font-size:15.6px;color:#2a2a42"><span class="r">Se</span>tup</span>
<svg style="left:973px;top:284.5px" width="5" height="9" viewBox="0 0 5 9"><path d="M0 0L5 4.5 0 9z" fill="#1e1e2a"/></svg>
<svg style="left:973px;top:393.0px" width="5" height="9" viewBox="0 0 5 9"><path d="M0 0L5 4.5 0 9z" fill="#1e1e2a"/></svg>
<svg style="left:973px;top:467.0px" width="5" height="9" viewBox="0 0 5 9"><path d="M0 0L5 4.5 0 9z" fill="#1e1e2a"/></svg>
<svg style="left:973px;top:506.0px" width="5" height="9" viewBox="0 0 5 9"><path d="M0 0L5 4.5 0 9z" fill="#1e1e2a"/></svg>
<div style="left:745px;top:378.5px;width:246px;height:1.3px;background:linear-gradient(90deg,rgba(226,227,232,0.3),#e2e3e8 10%,#e2e3e8 80%,rgba(226,227,232,0))"></div>
<div style="left:745px;top:452.5px;width:246px;height:1.3px;background:linear-gradient(90deg,rgba(226,227,232,0.3),#e2e3e8 10%,#e2e3e8 80%,rgba(226,227,232,0))"></div>
<div style="left:745px;top:491.5px;width:246px;height:1.3px;background:linear-gradient(90deg,rgba(226,227,232,0.3),#e2e3e8 10%,#e2e3e8 80%,rgba(226,227,232,0))"></div>
<div style="left:994px;top:381px;width:265px;height:184px;background:#fff;border:1px solid #9a9ba8"></div>
<span class="t" style="left:1041.60px;letter-spacing:0.323px;top:393.39px;font-size:15.6px;color:#2a2a42"><span class="r">I</span>tem Turnover</span>
<span class="t" style="left:1041.60px;letter-spacing:0.387px;top:428.59px;font-size:15.6px;color:#2a2a42"><span class="r">In</span>voicing Trader Card</span>
<span class="t" style="left:1041.60px;letter-spacing:0.228px;top:463.59px;font-size:15.6px;color:#2a2a42"><span class="r">Inv</span>oicing Journal</span>
<span class="t" style="left:1041.60px;letter-spacing:0.418px;top:498.59px;font-size:15.6px;color:#2a2a42"><span class="r">A</span>ccounting Update Audit</span>
<span class="t" style="left:1041.60px;letter-spacing:0.230px;top:537.49px;font-size:15.6px;color:#2a2a42"><span class="r">C</span>ontract Charges</span>
<div style="left:1041px;top:525.5px;width:216px;height:1.3px;background:linear-gradient(90deg,rgba(226,227,232,0.3),#e2e3e8 10%,#e2e3e8 80%,rgba(226,227,232,0))"></div>
</body></html>
